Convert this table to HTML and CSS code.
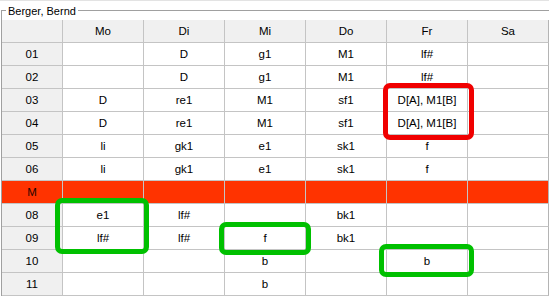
FILE: index.html
```html
<!DOCTYPE html>
<html lang="de">
<head>
<meta charset="utf-8">
<title>Stundenplan</title>
<link rel="stylesheet" href="styles.css">
</head>
<body>
<div class="topline"></div>
<div class="group">
  <span class="legend">Berger, Bernd</span>
  <div class="grid">
    <div class="cell head corner"></div>
    <div class="cell head">Mo</div>
    <div class="cell head">Di</div>
    <div class="cell head">Mi</div>
    <div class="cell head">Do</div>
    <div class="cell head">Fr</div>
    <div class="cell head">Sa</div>

    <div class="cell rh">01</div>
    <div class="cell"></div><div class="cell">D</div><div class="cell">g1</div><div class="cell">M1</div><div class="cell">lf#</div><div class="cell"></div>

    <div class="cell rh">02</div>
    <div class="cell"></div><div class="cell">D</div><div class="cell">g1</div><div class="cell">M1</div><div class="cell">lf#</div><div class="cell"></div>

    <div class="cell rh">03</div>
    <div class="cell">D</div><div class="cell">re1</div><div class="cell">M1</div><div class="cell">sf1</div><div class="cell">D[A], M1[B]</div><div class="cell"></div>

    <div class="cell rh">04</div>
    <div class="cell">D</div><div class="cell">re1</div><div class="cell">M1</div><div class="cell">sf1</div><div class="cell">D[A], M1[B]</div><div class="cell"></div>

    <div class="cell rh">05</div>
    <div class="cell">li</div><div class="cell">gk1</div><div class="cell">e1</div><div class="cell">sk1</div><div class="cell">f</div><div class="cell"></div>

    <div class="cell rh">06</div>
    <div class="cell">li</div><div class="cell">gk1</div><div class="cell">e1</div><div class="cell">sk1</div><div class="cell">f</div><div class="cell"></div>

    <div class="cell rh pause">M</div>
    <div class="cell pause"></div><div class="cell pause"></div><div class="cell pause"></div><div class="cell pause"></div><div class="cell pause"></div><div class="cell pause"></div>

    <div class="cell rh">08</div>
    <div class="cell">e1</div><div class="cell">lf#</div><div class="cell"></div><div class="cell">bk1</div><div class="cell"></div><div class="cell"></div>

    <div class="cell rh">09</div>
    <div class="cell">lf#</div><div class="cell">lf#</div><div class="cell">f</div><div class="cell">bk1</div><div class="cell"></div><div class="cell"></div>

    <div class="cell rh">10</div>
    <div class="cell"></div><div class="cell"></div><div class="cell">b</div><div class="cell"></div><div class="cell">b</div><div class="cell"></div>

    <div class="cell rh">11</div>
    <div class="cell"></div><div class="cell"></div><div class="cell">b</div><div class="cell"></div><div class="cell"></div><div class="cell"></div>
  </div>
  <div class="mark mark-red"></div>
  <div class="mark mark-green mark-g1"></div>
  <div class="mark mark-green mark-g2"></div>
  <div class="mark mark-green mark-g3"></div>
</div>
</body>
</html>
```
FILE: styles.css
```css
html, body {
  margin: 0;
  padding: 0;
  background: #ffffff;
}
body {
  font-family: "Liberation Sans", Arial, sans-serif;
  font-size: 11.5px;
  color: #000;
  overflow: hidden;
}
.topline {
  height: 1px;
  background: #e3e3e3;
}
.group {
  position: relative;
  margin: 9px 0 0 1px;
  padding-top: 9px;
  border-top: 1px solid #a0a0a0;
  border-left: 1px solid #a0a0a0;
}
.legend {
  position: absolute;
  top: -6px;
  left: 4px;
  padding: 0 2px;
  font-size: 11px;
  line-height: 13px;
  background: #fff;
}
.grid {
  display: grid;
  grid-template-columns: 61px repeat(6, 81px);
  grid-auto-rows: 23px;
}
.cell {
  box-sizing: border-box;
  border-right: 1px solid #c4c4c4;
  border-bottom: 1px solid #c4c4c4;
  line-height: 22px;
  text-align: center;
  white-space: nowrap;
}
.cell:nth-child(7n) {
  border-right-color: #b4b4b4;
}
.head, .rh {
  background: #f0f0f0;
}
.pause {
  background: #ff3300;
  color: #1e0500;
}
.mark {
  position: absolute;
  box-sizing: border-box;
  border: 5px solid;
  border-radius: 7px;
}
.mark-red {
  border-color: #f00000;
  left: 381px;
  top: 72px;
  width: 91px;
  height: 57px;
}
.mark-green {
  border-color: #00c000;
}
.mark-g1 {
  left: 53px;
  top: 187px;
  width: 94px;
  height: 56px;
}
.mark-g2 {
  left: 217px;
  top: 211px;
  width: 92px;
  height: 33px;
}
.mark-g3 {
  left: 377px;
  top: 233px;
  width: 95px;
  height: 33px;
}
```
